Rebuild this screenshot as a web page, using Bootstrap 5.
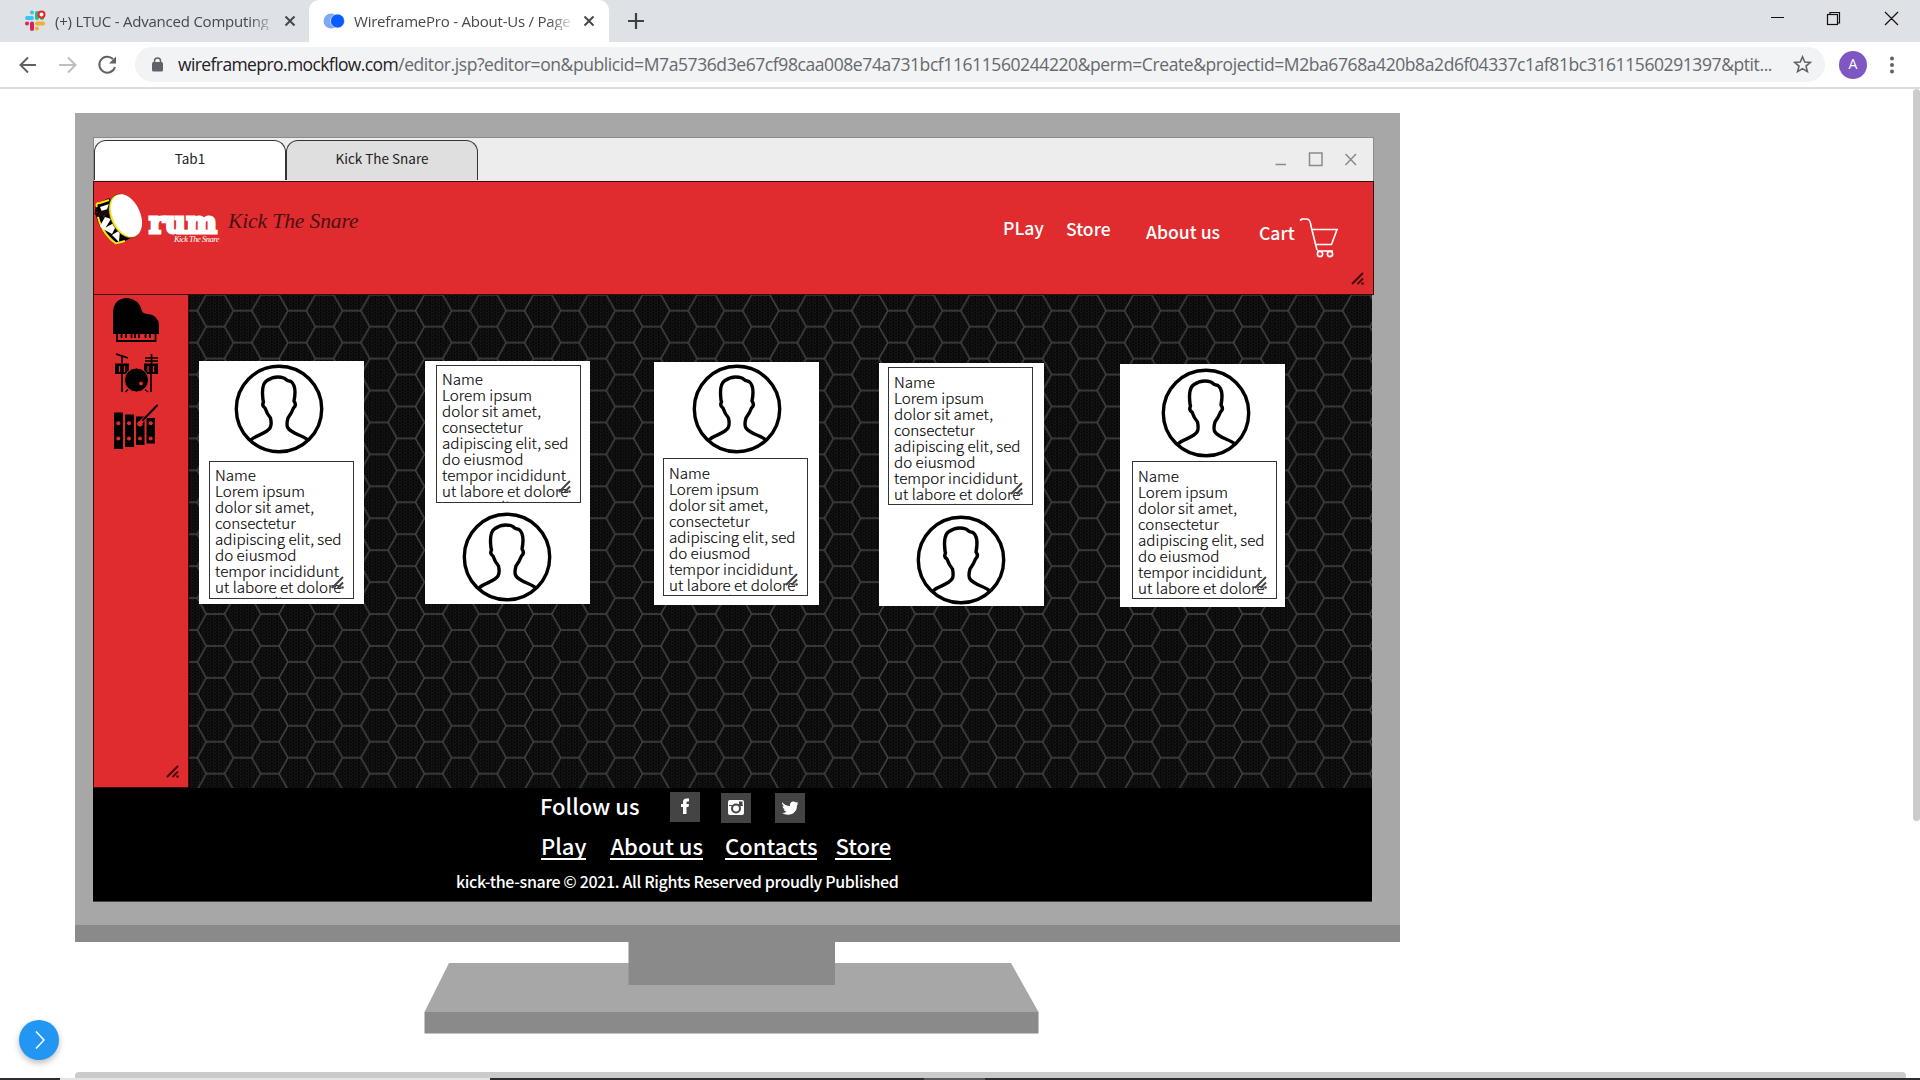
<!DOCTYPE html>
<html lang="en">
<head>
<meta charset="utf-8">
<title>WireframePro - About-Us</title>
<link href="https://cdn.jsdelivr.net/npm/bootstrap@5.3.0/dist/css/bootstrap.min.css" rel="stylesheet">
<style>
body{width:1920px;height:1080px;overflow:hidden;background:#fff;font-family:"Open Sans","Noto Sans",sans-serif;line-height:1.2}
svg{display:block;flex:none}
.tabstrip{height:42px;background:#dee1e6}
.btab{height:42px;font-size:15px;color:#45484c;letter-spacing:-.22px;padding-bottom:1px}
.btab.on{width:300px;background:#fff;border-radius:10px 10px 0 0;padding-left:14px}
.btab.off{width:309px;padding-left:24px}
.ttl{width:216px;white-space:nowrap;overflow:hidden;-webkit-mask-image:linear-gradient(90deg,#000 90%,#0003)}
.toolbar{height:47px;border-bottom:2px solid #dadce0;padding-left:18px}
.omni{width:1690px;height:35px;background:#f1f3f4;border-radius:18px;margin-left:17px;padding-left:17px;padding-right:13px;font-size:17.5px;color:#66696d;white-space:nowrap}
.omni b{font-weight:400;color:#1f2023;letter-spacing:-.6px}
.urltxt{letter-spacing:-.41px}
.user-dot{width:28px;height:28px;background:#7e57c2;color:#fff;font-size:14px;margin-left:14px}
.stage{height:989px;padding:24px 0 0 75px}
.monitor{width:1325px;height:829px;background:#a7a7a7;border-bottom:17px solid #8a8a8a;padding:24px 26px 0 18px}
.mock{width:1281px;height:765px;font-family:"Noto Sans CJK SC","Noto Sans",sans-serif}
.titlebar{height:44px;background:#ededed;border:1px solid #8b8b8b;border-bottom:0;padding-top:2px}
.mtab{width:192px;height:40px;border:1.5px solid #333;border-bottom:0;border-radius:12px 12px 0 0;font-size:13.5px;color:#222;line-height:35px;text-align:center;background:#dfdfdf}
.mtab.on{background:#fff}
.red{background:#e12c2f;border:1px solid #3d0c0d}
.mhead{height:114px;color:#fff}
.grip{position:absolute}
.script-name{font-family:"Liberation Serif",serif;font-style:italic}
.rum{font-family:"DejaVu Serif",serif;font-weight:700;font-size:29px;line-height:30px;letter-spacing:.5px;-webkit-text-stroke:2.8px #fff}
.nav-word{font-size:17.6px;font-weight:500;line-height:24px;white-space:nowrap}
.mbody{height:493px}
.side{width:96px;border-top:0}
.canvas{width:1183px;background:#060606}
.person{width:164.5px;height:243px;background:#fff;color:#000}
.bio{width:145px;height:138px;border:1.5px solid #333;padding:4.5px 0 0 5.5px;font-size:15.2px;line-height:16px;overflow:hidden;font-weight:300;-webkit-text-stroke:.15px #000;white-space:nowrap}
.mfoot{width:1279px;height:114px;background:#000;color:#fff;border-bottom:1px solid #444;font-weight:500}
.follow{font-size:22px;line-height:32px}
.flinks{font-size:22px;line-height:32px}
.flinks a{color:#fff;text-decoration:none;border-bottom:2px solid #fff;line-height:25px;display:block}
.soc{width:30px;height:30px;background:#444}
.copy{font-size:16px;line-height:24px;letter-spacing:-.35px;white-space:nowrap}
.vbar{position:absolute;right:0;top:89px;width:7px;height:732px;background:#cbcbcb;border-radius:4px}
.hbar{position:absolute;left:75px;top:1072px;width:1831px;height:6px;background:#cbcbcb;border-radius:4px 4px 0 0}
.taskbar{position:absolute;left:0;top:1078px;width:1920px;height:2px;background:#2d2d31}
.taskbar i{height:2px}
.drawer-btn{position:absolute;left:19px;top:1020px;width:40px;height:40px;background:#2196f3;box-shadow:0 3px 6px #0004}
</style>
<script src="https://cdn.jsdelivr.net/npm/bootstrap@5.3.0/dist/js/bootstrap.bundle.min.js"></script>
</head>
<body class="position-relative">
<svg width="0" height="0" class="position-absolute">
<defs>
<symbol id="grip" viewBox="0 0 13 13"><path d="M1 12 12 1M6.500 12 12 6.500" stroke="currentColor" stroke-width="2" fill="none"/><circle cx="11.500" cy="11.500" r="1.300" fill="currentColor"/></symbol>
<symbol id="x" viewBox="0 0 12 12"><path d="M1.500 1.500 10.500 10.500M10.500 1.500 1.500 10.500" stroke="currentColor" stroke-width="2" fill="none"/></symbol>
<symbol id="man" viewBox="0 0 90 90"><g fill="none" stroke="#000" stroke-width="3.400"><circle cx="45" cy="45" r="42.700"/><path d="M17 76C22 71 32 70 36 64Q38 61 36.500 54C33 50 32 47 31 44Q27.500 42 29.500 38L29 36Q27 20 33 16.500Q41 11 50 14Q53 17 57 17.500Q63 22 60 37Q63 41 59.500 44C58 48 57 50 54 54Q52 61 54 64C58 70 68 71 74 76" stroke-linejoin="round"/></g></symbol>
<pattern id="mesh" patternUnits="userSpaceOnUse" width="5.454" height="3.194"><path d="M0 0H1.800L2.727 1.597H4.527L5.454 0M1.800 3.194L2.727 1.597M4.527 1.597L5.454 3.194" fill="none" stroke="#1c1c1c" stroke-width=".7"/></pattern>
<pattern id="hex" patternUnits="userSpaceOnUse" width="54.540" height="31.930" x="44.500" y="15.700"><path d="M0 0H18.300L27.300 15.965H45.540L54.540 0M18.300 31.930L27.300 15.965M45.540 15.965L54.540 31.930M0 31.930H18.300" fill="none" stroke="#454545" stroke-width="1.500"/></pattern>
</defs>
</svg>

<header>
  <div class="tabstrip d-flex">
    <div class="btab off d-flex align-items-center">
      <svg width="22" height="22" viewBox="0 0 22 22"><g stroke-width="4" stroke-linecap="round"><path d="M8 2.500V2.600M3 8H8" stroke="#36c5f0"/><path d="M13 3V8M18 8V8.100" stroke="#2eb67d"/><path d="M13 13.500H19M13 18.500V18.600" stroke="#ecb22e"/><path d="M8 13.500V19M3 13.500V13.600" stroke="#e01e5a"/></g><circle cx="17.500" cy="4.500" r="3" fill="#fff" stroke="#e8252a" stroke-width="2"/></svg>
      <div class="ttl" style="margin-left:9px">(+) LTUC - Advanced Computing</div>
      <svg width="12" height="12" style="margin-left:13px"><use href="#x"/></svg>
    </div>
    <div class="btab on d-flex align-items-center">
      <svg width="22" height="16" viewBox="0 0 22 16"><circle cx="8" cy="8" r="7.500" fill="#7fa8f5"/><circle cx="14.500" cy="8" r="7" fill="#0b5cff" stroke="#fff" stroke-width=".6"/></svg>
      <div class="ttl" style="margin-left:9px">WireframePro - About-Us / Page</div>
      <svg width="12" height="12" style="margin-left:13px"><use href="#x"/></svg>
    </div>
    <svg width="16" height="16" style="margin:13px 0 0 19px"><path d="M8 0V16M0 8H16" stroke="#3c4043" stroke-width="2.200"/></svg>
    <svg class="ms-auto" width="150" height="42" viewBox="1770 0 150 42" fill="none" stroke="#111" stroke-width="1.200"><path d="M1771 17.500H1784M1885 12 1898 25M1898 12 1885 25M1830 14.500V12.500H1839.500V23H1837.500"/><rect x="1827.500" y="14.500" width="10" height="10"/></svg>
  </div>
  <div class="toolbar d-flex align-items-center">
    <svg width="100" height="20" viewBox="18 55 100 20" fill="none" stroke-width="2"><path d="M36 65H21M28 57.500 20.500 65 28 72.500" stroke="#5f6368"/><path d="M59 65H75M68 57.500 75.500 65 68 72.500" stroke="#bcbec1"/><path d="M113 59A8 8 0 1 0 115 67" stroke="#5f6368"/><path d="M116 56.500V63.500H109Z" fill="#5f6368"/></svg>
    <div class="omni d-flex align-items-center">
      <svg width="11" height="15" viewBox="0 0 11 15"><rect y="5" width="11" height="9.500" rx="1.500" fill="#5f6368"/><path d="M2.500 6V4a3 3 0 0 1 6 0V6" stroke="#5f6368" stroke-width="1.500" fill="none"/></svg>
      <div class="urltxt" style="margin-left:15px"><b>wireframepro.mockflow.com</b>/editor.jsp?editor=on&amp;publicid=M7a5736d3e67cf98caa008e74a731bcf11611560244220&amp;perm=Create&amp;projectid=M2ba6768a420b8a2d6f04337c1af81bc31611560291397&amp;ptit...</div>
      <svg class="ms-auto" width="19" height="19" viewBox="0 0 19 19"><path d="M9.500 1.800 11.700 7 17.300 7.400 13 11.100 14.400 16.600 9.500 13.600 4.600 16.600 6 11.100 1.700 7.400 7.300 7Z" fill="none" stroke="#5f6368" stroke-width="1.600"/></svg>
    </div>
    <div class="user-dot rounded-circle d-flex align-items-center justify-content-center">A</div>
    <svg width="6" height="18" style="margin-left:22px" fill="#5f6368"><circle cx="3" cy="2.500" r="2"/><circle cx="3" cy="9" r="2"/><circle cx="3" cy="15.500" r="2"/></svg>
  </div>
</header>

<main class="stage">
  <div class="monitor">
    <div class="mock">
      <div class="titlebar d-flex">
        <div class="mtab on">Tab1</div><div class="mtab">Kick The Snare</div>
        <svg class="ms-auto" width="100" height="38" viewBox="1273 140 100 38" fill="none" stroke="#8a8a8a" stroke-width="1.500"><path d="M1275.500 164.500H1286M1345.500 154 1356 165M1356 154 1345.500 165"/><rect x="1309.500" y="153" width="12.500" height="12.500"/></svg>
      </div>
      <div class="mhead red d-flex position-relative">
        <svg width="49" height="54" viewBox="94 192 49 54" style="margin-top:10px"><path d="M96 204 109 198 134 236 127 240 117 244.500Q99 234 95 211Z" fill="#000"/><path d="M97 207Q95 203 100 203L109 200M97 212Q100 232 116 243.500L125 241" fill="none" stroke="#f6e71d" stroke-width="2"/><path d="M100 207 104 217 109 204ZM100 226 105 217 111 219 104 230ZM103 229 112 224 118 222 112 234ZM112 235 120 230 119 242Z" fill="#fff"/><path d="M94 213 108 209 109 215 97 217Z" fill="#20070b"/><ellipse cx="125" cy="216" rx="14.500" ry="23" transform="rotate(-24 125 216)" fill="#f6e71d" stroke="#222" stroke-width=".5"/><ellipse cx="126.500" cy="215.500" rx="13.800" ry="22.500" transform="rotate(-24 126.500 215.500)" fill="#fff"/></svg>
        <div style="margin:26px 0 0 6px;width:72px"><div class="rum">rum</div><div class="script-name text-end" style="font-size:8.500px;line-height:9px;letter-spacing:-.5px;margin:-3px 2px 0 0">Kick The Snare</div></div>
        <div class="script-name" style="color:#4b0f12;font-size:21.500px;line-height:28px;letter-spacing:-.1px;margin:25px 0 0 7px;white-space:nowrap">Kick The Snare</div>
        <div class="d-flex ms-auto">
          <div class="nav-word" style="margin-top:34px;width:63px">PLay</div>
          <div class="nav-word" style="margin-top:35px;width:80px">Store</div>
          <div class="nav-word" style="margin-top:38px;width:113px">About us</div>
          <div class="nav-word" style="margin-top:39px;width:38px">Cart</div>
          <svg width="76" height="44" viewBox="1297 215 76 44" style="margin-top:33px" fill="none" stroke="#fff" stroke-width="1.600"><path d="M1300 220.500 1302 219H1307Q1310 219 1311 226L1317 250M1311.500 229.500H1337L1331.500 244.500H1315.500M1317 251H1333"/><circle cx="1320" cy="254" r="2.600"/><circle cx="1330" cy="254" r="2.600"/></svg>
        </div>
        <svg class="grip" width="13" height="13" style="right:9px;bottom:9px;color:#46090b"><use href="#grip"/></svg>
      </div>
      <div class="mbody d-flex">
        <div class="side red position-relative">
          <svg width="94" height="180" viewBox="94 295 94 180">
            <path d="M113 334V312Q114 298 127.500 298Q139 299 142 311Q143 314 148 314Q158 315 159 325V334Z"/>
            <path d="M117 333V341H155.500V333M121.500 334V338M126 334V338M131.500 334V338M135 334V338M139 334V338M145.500 334V338M150 334V338" fill="none" stroke="#000" stroke-width="1.800"/>
            <path d="M116 354 128 358M122 355V363M145 358H158M145 361H158M151.500 354V364M122 372V392M151 372V392" stroke="#000" stroke-width="1.700"/>
            <path d="M115 363.500H129V374H115ZM144 363.500H158V374H144Z"/><path d="M119.500 366V372M124.500 366V372M148 366V372M153.500 366V372" stroke="#e12c2f" stroke-width="1.300"/>
            <circle cx="136.500" cy="380" r="12" stroke="#e12c2f"/><circle cx="141" cy="383.500" r="1.900" fill="#e12c2f"/><path d="M125.500 392 128 389.500M148 392 145 389.500" stroke="#000" stroke-width="1.500"/>
            <path d="M114 412.500H123V449H114ZM125 414.500H134V447H125ZM136 416.500H144.500V445H136ZM146.500 418H155V443.500H146.500Z"/>
            <g fill="#e12c2f"><circle cx="118.300" cy="423.300" r="2"/><circle cx="129" cy="423.300" r="2"/><circle cx="140" cy="423.800" r="2.700"/><circle cx="150.700" cy="423.300" r="2"/><circle cx="118.300" cy="438.500" r="2"/><circle cx="129" cy="438.500" r="2"/><circle cx="140" cy="438.500" r="2"/><circle cx="150.700" cy="438.500" r="2"/></g>
            <path d="M141 422 157.500 405" stroke="#e12c2f" stroke-width="3.500"/><path d="M143 420 157 405.500" stroke="#000" stroke-width="2" stroke-linecap="round"/>
          </svg>
          <svg class="grip" width="13" height="13" style="right:9px;bottom:9px;color:#46090b"><use href="#grip"/></svg>
        </div>
        <div class="canvas position-relative">
          <svg width="1183" height="493" class="position-absolute"><rect width="1183" height="493" fill="url(#mesh)"/><rect width="1183" height="493" fill="url(#hex)"/></svg>
          <div class="d-flex position-relative align-items-start" id="people"></div>
        </div>
      </div>
      <div class="mfoot">
        <div class="follow d-flex" style="padding-left:447px">
          <div style="width:130px;margin-top:1px">Follow us</div>
          <div class="soc" style="margin-top:4px"><svg width="30" height="30"><path d="M13 22V15H11V12H13V10Q13 6.500 16.500 6.500H19V9.500H17.500Q16.500 9.500 16.500 10.500V12H19L18.500 15H16.500V22Z" fill="#fff"/></svg></div>
          <div class="soc" style="margin:5px 0 0 21px"><svg width="30" height="30"><rect x="7" y="7" width="16" height="15" rx="2" fill="#fff"/><circle cx="15" cy="15.500" r="4" fill="none" stroke="#444" stroke-width="2"/><rect x="18" y="8.500" width="3.500" height="3.500" fill="#444"/><path d="M8 12.500H11M19 12.500H22" stroke="#444"/></svg></div>
          <div class="soc" style="margin:5px 0 0 24px"><svg width="30" height="30"><path d="M7 9Q10 13 15 13Q14.500 9 18 8.500Q20 8.500 21 9.500L23 8.700L21.800 10.800L23.500 10.500L22 12.200Q22 20 15 21.500Q11 22.500 7 20Q10 20 11.500 18.700Q9 18 8.500 16.500H10Q7.500 15.500 7.500 13L9 13.400Q6.500 11.500 7 9Z" fill="#fff"/></svg></div>
        </div>
        <div class="flinks d-flex" style="padding:10px 0 1px 448px">
          <a href="#">Play</a><a href="#" style="margin-left:24px">About us</a><a href="#" style="margin-left:22px">Contacts</a><a href="#" style="margin-left:18px">Store</a>
        </div>
        <div class="copy" style="padding:8px 0 0 363px">kick-the-snare © 2021. All Rights Reserved proudly Published</div>
      </div>
    </div>
  </div>
  <svg width="617" height="94" viewBox="423 942 617 94" style="margin-left:348px"><path d="M449 963H1011L1038.500 1012H424.500Z" fill="#a7a7a7"/><path d="M424.500 1012H1038.500V1033.500H424.500Z" fill="#8a8a8a"/><path d="M628.500 942H835V985H628.500Z" fill="#8a8a8a"/></svg>
</main>

<div class="vbar"></div><div class="hbar"></div>
<div class="taskbar d-flex"><i style="width:60px"></i><i style="width:430px;background:#e4e4e4"></i><i style="width:434px"></i><i style="width:61px;background:#5a5a5e"></i></div>
<div class="drawer-btn rounded-circle d-flex align-items-center justify-content-center"><svg width="12" height="20" viewBox="0 0 12 20"><path d="M3 1.500 11 10 3 18.500" fill="none" stroke="#fff" stroke-width="1.500"/></svg></div>

<script>
// ml/mt: card offsets; bx/by: bio box; ax/ay: portrait, all inside the card
const people=[
 {ml:10,mt:66,bx:9.5,by:99.5,ax:35,ay:3},
 {ml:61.5,mt:66,bx:10.5,by:3.5,ax:37,ay:151},
 {ml:64.5,mt:67,bx:8.5,by:96,ax:38,ay:2},
 {ml:60.5,mt:68,bx:8.5,by:4,ax:36.5,ay:152},
 {ml:76.5,mt:69,bx:11.5,by:97,ax:40.5,ay:4}];
const lines=['Name','Lorem ipsum','dolor sit amet,','consectetur','adipiscing elit, sed','do eiusmod','tempor incididunt','ut labore et dolore','magna aliqua.'];
document.getElementById('people').innerHTML=people.map(p=>{
 const man=mt=>`<svg width="90" height="90" style="margin:${mt}px 0 0 ${p.ax}px"><use href="#man"/></svg>`;
 const bio=mt=>`<div class="bio position-relative" style="margin:${mt}px 0 0 ${p.bx}px">${lines.join('<br>')}<svg class="grip" width="13" height="13" style="right:9px;bottom:9px;color:#444"><use href="#grip"/></svg></div>`;
 const inner=p.by<p.ay?bio(p.by)+man(p.ay-p.by-138):man(p.ay)+bio(p.by-p.ay-90);
 return `<div class="person d-flex flex-column flex-shrink-0" style="margin:${p.mt}px 0 0 ${p.ml}px">${inner}</div>`;}).join('');
</script>
</body>
</html>
